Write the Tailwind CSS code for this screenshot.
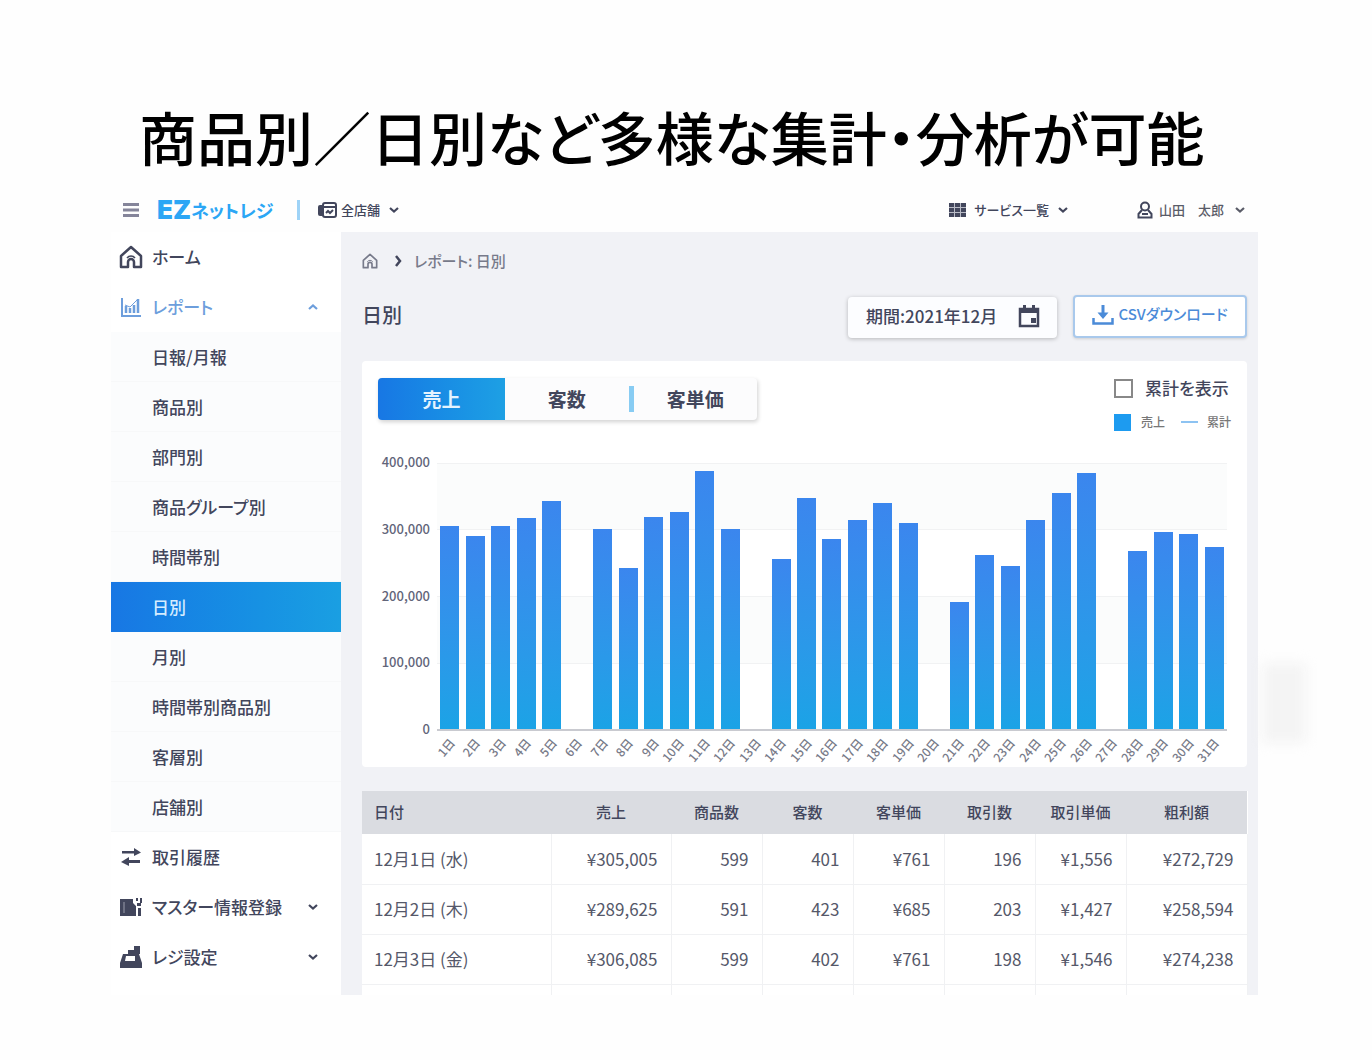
<!DOCTYPE html>
<html lang="ja">
<head>
<meta charset="utf-8">
<meta name="viewport" content="width=device-width, initial-scale=1">
<title>EZネットレジ 日別レポート</title>
<script src="https://cdn.jsdelivr.net/npm/@tailwindcss/browser@4"></script>
</head>
<body class="bg-[#fefefe] pt-[98px] pr-[114px] pb-16 pl-[111px] font-['Noto_Sans_CJK_JP',sans-serif] font-medium text-[#42465c] [font-feature-settings:'palt']">
<svg class="hidden" aria-hidden="true">
  <symbol id="down" viewBox="0 0 12 8"><path d="M2 2l4 3.500 4-3.500" fill="none" stroke="currentColor" stroke-width="2.200"/></symbol>
  <symbol id="home" viewBox="0 0 24 24"><path d="M2 11L12 2l10 9v11h-7v-5a3 3 0 0 0-6 0v5H2z" fill="none" stroke="currentColor" stroke-width="2.500" stroke-linejoin="round"/><path d="M8 13a5 5 0 0 1 8 0" fill="none" stroke="currentColor" stroke-width="1.500"/></symbol>
</svg>

<h1 class="h-[90px] pl-7 text-[58px] leading-[76px] font-medium whitespace-nowrap text-black">商品別／日別など多様な集計・分析が可能</h1>

<div class="relative">
  <header class="flex h-11 items-center pr-3 text-[13px]">
    <button aria-label="メニュー" class="ml-3 text-[#85859a]"><svg class="size-4" viewBox="0 0 16 16"><path d="M0 2.500h16M0 8h16M0 13.500h16" stroke="currentColor" stroke-width="3"/></svg></button>
    <a href="#" class="ml-[18px] flex w-[122px] items-center whitespace-nowrap text-[#2ba6f5]"><span class="font-['Inter',sans-serif] text-[26px] leading-6 font-black">EZ</span><span class="text-[18px] leading-6 font-bold">ネットレジ</span></a>
    <span class="ml-[18px] h-5 w-[3px] bg-[#9ed3f7]"></span>
    <button class="ml-[17px] flex items-center gap-1">
      <svg class="h-4 w-5" viewBox="0 0 20 16"><rect x="1" y="3" width="12" height="11" rx="2" fill="currentColor"/><rect x="6" y="1" width="13" height="14" rx="2" fill="#fff" stroke="currentColor" stroke-width="2"/><path d="M6 5h13M9 11l2-2 2 2 3-3" fill="none" stroke="currentColor" stroke-width="2"/></svg>
      全店舗
      <svg class="ml-1 h-2 w-3"><use href="#down"/></svg>
    </button>
    <button class="ml-auto flex items-center gap-2">
      <svg class="h-4 w-[17px]" viewBox="0 0 17 16"><path d="M0 1h17v14H0z" fill="currentColor"/><path d="M0 5.500h17M0 10.500h17M5.500 1v14M11.500 1v14" stroke="#b9bbc6"/></svg>
      サービス一覧
      <svg class="h-2 w-3"><use href="#down"/></svg>
    </button>
    <button class="ml-[68px] flex items-center gap-[6px] text-[#5a5c68]">
      <svg class="h-[18px] w-4 text-[#42465c]" viewBox="0 0 16 18"><circle cx="8" cy="5.500" r="4" fill="none" stroke="currentColor" stroke-width="2"/><path d="M5 9l-3.500 4v3.500h13V13L11 9" fill="none" stroke="currentColor" stroke-width="2"/><path d="M5 13h6" stroke="currentColor" stroke-width="2"/></svg>
      山田　太郎
      <svg class="ml-1 h-2 w-3"><use href="#down"/></svg>
    </button>
  </header>

  <div class="flex h-[763px] overflow-hidden">
    <nav class="w-[230px] shrink-0 bg-white text-[17px] leading-6">
      <a href="#" class="flex h-[50px] items-center gap-[9px] pl-2"><svg class="size-6"><use href="#home"/></svg>ホーム</a>
      <a href="#" class="flex h-[50px] items-center gap-[9px] pr-[22px] pl-2 text-[#6d9edc]">
        <svg class="size-6" viewBox="0 0 24 24" fill="none" stroke="currentColor" stroke-width="2"><path d="M3 3v18h19"/><path d="M7 11v7M11 13v5M15 10v8M19 4v14" stroke-width="2.500"/><path d="M6 10l5 2 8-8" stroke-width="1"/></svg>レポート
        <svg class="ml-auto h-2 w-3 rotate-180"><use href="#down"/></svg></a>
      <div class="flex flex-col bg-[#fbfcfd]" id="sub"></div>
      <a href="#" class="flex h-[50px] items-center gap-[9px] pl-2"><svg class="size-6" viewBox="0 0 24 24" fill="currentColor"><path d="M3 6h12V3l7 4.500-7 3.500V8.500H3zM21 15H10v-3l-8 5 8 4v-3h11z"/></svg>取引履歴</a>
      <a href="#" class="flex h-[50px] items-center gap-[9px] pr-[22px] pl-2"><svg class="size-6" viewBox="0 0 24 24" fill="currentColor"><path d="M1 4h13v4l3 3v10H1z"/><path d="M17 3h2v3h-2zM21 3h2v5h-2zM18 8h4v3h-4zM19 13h3v8h-3z"/><path d="M5 7v11" stroke="#9a9cab" fill="none"/></svg>マスター情報登録<svg class="ml-auto h-2 w-3"><use href="#down"/></svg></a>
      <a href="#" class="flex h-[50px] items-center gap-[9px] pr-[22px] pl-2"><svg class="size-6" viewBox="0 0 24 24"><path d="M4 9h5V5h6v4h5l3 9v5H1v-5z" fill="currentColor"/><path d="M15 1h6v8h-6z" fill="currentColor"/><path d="M7 11h9v5H6z" fill="#fff"/></svg>レジ設定<svg class="ml-auto h-2 w-3"><use href="#down"/></svg></a>
    </nav>

    <main class="min-w-0 flex-1 bg-[#f1f2f6] pr-[11px] pl-[21px]">
      <div class="flex h-[58px] items-center text-[15px] text-[#777a8a]">
        <svg class="size-4"><use href="#home"/></svg>
        <svg class="mr-3 ml-4 h-3 w-2 text-[#42465c]" viewBox="0 0 8 12"><path d="M2 1l4 5-4 5" fill="none" stroke="currentColor" stroke-width="2.500"/></svg>
        レポート: 日別
      </div>
      <div class="flex h-[71px] items-start">
        <h2 class="mt-[11px] text-[20px] leading-7">日別</h2>
        <button class="mt-[7px] ml-auto flex h-[41px] w-[209px] items-center justify-between rounded-sm bg-[#fcfdff] pr-4 pb-1 pl-[18px] text-[17px] shadow-[0_1px_4px_rgba(0,0,0,.25)]">期間:2021年12月
          <svg class="size-6" viewBox="0 0 24 24"><path d="M3 5h18v17H3z" fill="none" stroke="currentColor" stroke-width="2.500"/><path d="M2 4h20v5H2zM6 1h3v4H6zM15 1h3v4h-3zM14 14h5v5h-5z" fill="currentColor"/></svg>
        </button>
        <button class="mt-[5px] ml-4 flex h-[43px] w-[174px] items-center justify-center gap-1 rounded-sm border-2 border-[#a9c9ec] bg-white pb-1 text-[15px] whitespace-nowrap text-[#4b8bd8] shadow-[0_1px_3px_rgba(0,0,0,.15)]">
          <svg class="size-[22px]" viewBox="0 0 22 22"><path d="M11 1v12" stroke="currentColor" stroke-width="3"/><path d="M5.500 8.500h11L11 15z" fill="currentColor"/><path d="M1.500 14v5.500h19V14" fill="none" stroke="currentColor" stroke-width="2.500"/></svg>CSVダウンロード</button>
      </div>

      <section class="flex h-[406px] flex-col rounded-sm bg-white px-4 pt-[17px]">
        <div class="flex h-[85px] items-start justify-between">
          <div class="flex h-[42px] w-[379px] items-center rounded-sm bg-[#fcfcfd] text-[19px] font-bold shadow-[1px_2px_4px_rgba(0,0,0,.18)]">
            <button class="h-full w-[127px] rounded-l-sm bg-linear-to-r from-[#1877e4] to-[#1ea0e4] text-[#e4f3ff]">売上</button>
            <button class="h-full flex-1">客数</button>
            <span class="h-[26px] w-[5px] bg-[#88ccf3]"></span>
            <button class="h-full flex-1">客単価</button>
          </div>
          <div class="flex flex-col gap-3">
            <label class="flex h-5 items-center gap-3 text-[17px]"><input type="checkbox" class="size-[19px] appearance-none border-2 border-[#888] bg-white">累計を表示</label>
            <div class="flex h-6 items-center text-[12px] text-[#777]"><span class="mr-[10px] size-[17px] bg-[#1d9bf0]"></span>売上<span class="mr-[9px] ml-4 h-[2px] w-[17px] bg-[#8dc3f2]"></span>累計</div>
          </div>
        </div>
        <div class="flex pr-1">
          <div class="-mt-[11px] flex h-[287px] w-[52px] flex-col justify-between text-right text-[13px] leading-5 text-[#62657a]"><span>400,000</span><span>300,000</span><span>200,000</span><span>100,000</span><span>0</span></div>
          <div class="ml-[7px] min-w-0 flex-1">
            <div class="grid h-[268px] grid-cols-31 border-b-2 border-[#c9cad0] bg-[linear-gradient(#f1f2f3_1px,#fbfcfc_1px,#fbfcfc_66px,#f1f2f3_66px,#f1f2f3_67px,#fff_67px,#fff_133px,#f1f2f3_133px,#f1f2f3_134px,#fbfcfc_134px,#fbfcfc_200px,#f1f2f3_200px,#f1f2f3_201px,#fff_201px)]" id="bars"></div>
            <div class="grid grid-cols-31 pt-1 text-[12px] leading-4 text-[#777a88]" id="days"></div>
          </div>
        </div>
      </section>

      <table class="mt-6 w-full table-fixed border-collapse bg-white text-[17px] font-normal text-[#555869]">
        <colgroup><col class="w-[189px]"><col class="w-[120px]"><col class="w-[91px]"><col class="w-[91px]"><col class="w-[91px]"><col class="w-[91px]"><col class="w-[91px]"><col class="w-[121px]"></colgroup>
        <thead><tr class="h-[43px] bg-[#dadce1] text-[15px] text-[#42465c]" id="head"></tr></thead>
        <tbody id="rows"></tbody>
      </table>
    </main>
  </div>
  <div class="absolute top-[475px] -right-[48px] h-[80px] w-[44px] bg-[#f4f4f4] blur-[6px]"></div>
</div>

<script>
const $ = id => document.getElementById(id);
$('sub').innerHTML = ['日報/月報','商品別','部門別','商品グループ別','時間帯別','日別','月別','時間帯別商品別','客層別','店舗別'].map(t =>
  `<a href="#" class="flex h-[50px] items-center pl-[41px] ${t === '日別' ? 'bg-linear-to-r from-[#1877e4] to-[#1a9fe2] text-[#d5ecff]' : 'border-b border-[#f7f8f9]'}">${t}</a>`).join('');
const heights = [203,193,203,211,228,0,200,161,212,217,258,200,0,170,231,190,209,226,206,0,127,174,163,209,236,256,0,178,197,195,182];
$('bars').innerHTML = heights.map(h => `<div class="flex items-end justify-center"><div class="w-[19px] bg-linear-to-b from-[#3b86ee] to-[#1ba3e6]" style="height:${h}px"></div></div>`).join('');
$('days').innerHTML = heights.map((_, i) => `<span class="flex justify-end pr-[17px]"><span class="origin-top-right -rotate-50 whitespace-nowrap">${i + 1}日</span></span>`).join('');
$('head').innerHTML = ['日付','売上','商品数','客数','客単価','取引数','取引単価','粗利額'].map((t, i) => `<th class="font-medium ${i ? '' : 'pl-3 text-left'}">${t}</th>`).join('');
$('rows').innerHTML = [
  ['12月1日 (水)','¥305,005','599','401','¥761','196','¥1,556','¥272,729'],
  ['12月2日 (木)','¥289,625','591','423','¥685','203','¥1,427','¥258,594'],
  ['12月3日 (金)','¥306,085','599','402','¥761','198','¥1,546','¥274,238'],
  ['','','','','','','','']
].map(r => `<tr class="h-[50px]">${r.map((c, i) => `<td class="border-r border-b border-[#f0f1f3] ${i ? 'pr-[13px] text-right' : 'pl-3'}">${c}</td>`).join('')}</tr>`).join('');
</script>
</body>
</html>
